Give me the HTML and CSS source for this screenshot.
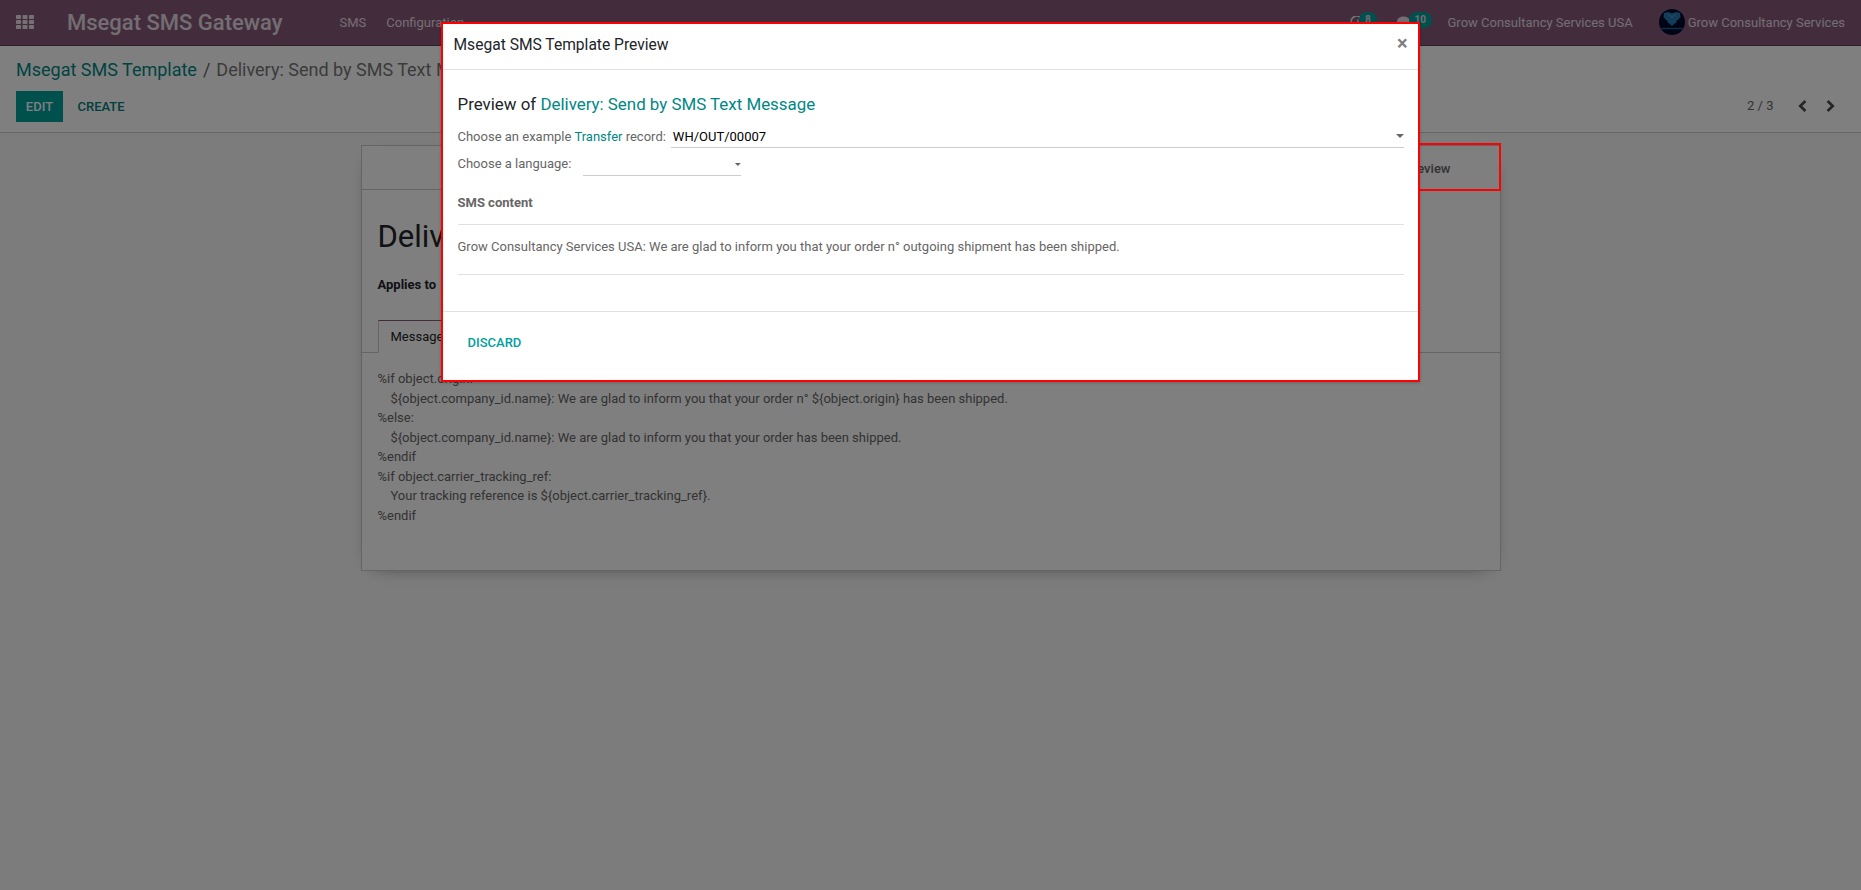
FILE: index.html
```html
<!DOCTYPE html>
<html lang="en">
<head>
<meta charset="utf-8">
<title>Msegat SMS Gateway</title>
<link rel="stylesheet" href="styles.css">
</head>
<body>
<div class="app">
  <header class="navbar">
    <svg class="apps" width="18" height="14" viewBox="0 0 18 14" fill="currentColor"><rect width="5" height="4" rx=".8"/><rect x="6.5" width="5" height="4" rx=".8"/><rect x="13" width="5" height="4" rx=".8"/><rect y="5" width="5" height="4" rx=".8"/><rect x="6.5" y="5" width="5" height="4" rx=".8"/><rect x="13" y="5" width="5" height="4" rx=".8"/><rect y="10" width="5" height="4" rx=".8"/><rect x="6.5" y="10" width="5" height="4" rx=".8"/><rect x="13" y="10" width="5" height="4" rx=".8"/></svg>
    <span class="brand">Msegat SMS Gateway</span>
    <nav class="menu"><span>SMS</span><span>Configuration</span></nav>
    <div class="systray">
      <span class="tray clock"><svg width="12" height="14" viewBox="0 0 12 14" fill="none" stroke="currentColor" stroke-width="1.8"><path d="M10 1.200A5.500 5.500 0 1 0 10 10"/><path d="M7.800 3.500v4H5" stroke-width="1.4"/></svg><b class="badge">8</b></span>
      <span class="tray chat"><svg width="14" height="13" viewBox="0 0 14 13" fill="currentColor"><ellipse cx="6.5" cy="5.5" rx="6.5" ry="5"/><path d="M3 9L1 13l5-2.5z"/></svg><b class="badge">10</b></span>
      <span class="company">Grow Consultancy Services USA</span>
      <svg class="avatar" width="26" height="26" viewBox="0 0 26 26"><circle cx="13" cy="13" r="13" fill="#000b2c"/><path d="M5 4l4-1 4 1.500L17 3l4 1 .5 4-3 3.500-1 0 0 2-2 1-2.500 2.500-2.500-2.500-2-1 0-2-1 0-3-3.500z" fill="#2878b0"/><path d="M10 5.500l3 3 3-3" stroke="#48a6dc" fill="none"/><path d="M2 19.500h22" stroke="#145c9c" stroke-width="1.200"/></svg>
      <span class="user">Grow Consultancy Services</span>
    </div>
  </header>
  <section class="panel">
    <div class="crumbs"><a>Msegat SMS Template</a><i>/</i><span>Delivery: Send by SMS Text Message</span></div>
    <div class="tools">
      <button class="btn edit">EDIT</button><button class="btn create">CREATE</button>
      <span class="count">2 / 3</span>
      <svg class="prev" width="9" height="12" viewBox="0 0 9 12" fill="none" stroke="currentColor" stroke-width="2.700"><path d="M7.400 1L2.300 6l5.100 5"/></svg>
      <svg class="next" width="9" height="12" viewBox="0 0 9 12" fill="none" stroke="currentColor" stroke-width="2.700"><path d="M1.600 1l5.100 5-5.100 5"/></svg>
    </div>
  </section>
  <main class="content">
    <article class="sheet">
      <div class="statusbar"><span>Preview</span></div>
      <h1 class="title">Delivery: Send by SMS Text Message</h1>
      <div class="applies">Applies to</div>
      <div class="tabs"><span class="tab">Message</span></div>
      <pre class="code">%if object.origin:
    ${object.company_id.name}: We are glad to inform you that your order n° ${object.origin} has been shipped.
%else:
    ${object.company_id.name}: We are glad to inform you that your order has been shipped.
%endif
%if object.carrier_tracking_ref:
    Your tracking reference is ${object.carrier_tracking_ref}.
%endif</pre>
    </article>
  </main>
</div>
<div class="backdrop"></div>
<div class="highlight"></div>
<div class="modal">
  <div class="modal-head"><span>Msegat SMS Template Preview</span><span class="close">×</span></div>
  <div class="modal-body">
    <h3 class="preview">Preview of <a>Delivery: Send by SMS Text Message</a></h3>
    <div class="row record"><span>Choose an example <a>Transfer</a> record:</span><div class="field"><span>WH/OUT/00007</span><i class="caret"></i></div></div>
    <div class="row lang"><span>Choose a language:</span><div class="field"><i class="caret"></i></div></div>
    <div class="label">SMS content</div>
    <p class="sms">Grow Consultancy Services USA: We are glad to inform you that your order n° outgoing shipment has been shipped.</p>
  </div>
  <div class="modal-foot">DISCARD</div>
</div>
</body>
</html>
```

FILE: styles.css
```css
* { box-sizing: border-box; }
body { margin: 0; height: 890px; overflow: hidden; font: 13px/19.5px Roboto, "Liberation Sans", sans-serif; color: #666; }
.app { height: 890px; display: flex; flex-direction: column; background: #f9f9f9; }
a { color: #008784; }
h1, h3, p, pre { margin: 0; font-weight: 400; }

.navbar { height: 46px; display: flex; align-items: center; padding: 0 16px; background: #875a7b; border-bottom: 1px solid #5f3f56; color: #fff; flex: none; white-space: nowrap; }
.apps { color: #e8e0e6; margin-top: -1px; }
.brand { margin-left: 33px; width: 272.5px; font-size: 22px; font-weight: 500; color: #e6dde4; }
.menu { display: flex; gap: 20px; color: #e6dde4; }
.systray { margin-left: auto; display: flex; align-items: center; color: #e6dde4; }
.tray { position: relative; width: 47px; height: 14px; }
.chat { width: 51px; }
.tray svg { display: block; }
.badge { position: absolute; left: 9.5px; top: -4px; padding: 0 6px; border-radius: 10px; background: #00a09d; font-size: 10px; line-height: 16px; font-weight: 700; }
.chat .badge { left: 12px; }
.avatar { margin: -1px 3px 0 26px; }

.panel { height: 87px; background: #fff; border-bottom: 1px solid #ccc; padding: 12px 16px 0; flex: none; }
.crumbs { font-size: 18px; line-height: 24px; display: flex; white-space: nowrap; }
.crumbs i { font-style: normal; margin: 0 6px; color: #666; }
.crumbs span { color: #777; }
.tools { display: flex; align-items: center; margin-top: 9px; height: 31px; }
.btn { border: 0; height: 31px; padding: 0; font: 500 13px/31px Roboto, sans-serif; background: none; }
.edit { width: 47px; background: #00a09d; color: #fff; }
.create { margin-left: 14.5px; color: #00807d; }
.count { margin: -2px 0 0 auto; color: #666; }
.prev, .next { color: #4c4c4c; margin-top: -2px; }
.prev { margin-left: 24.5px; }
.next { margin-left: 19px; margin-right: 10px; }

.content { flex: 1; padding: 12px 360.5px 0; }
.sheet { height: 426px; background: #fff; border: 1px solid #c8c8d3; box-shadow: 0 5px 20px -15px #000; }
.statusbar { height: 44px; border-bottom: 1px solid #c8c8d3; display: flex; justify-content: flex-end; padding: 13px 49px 0 0; font-weight: 500; }
.title { font-size: 31px; line-height: 40px; padding: 27px 16px 0; color: #212529; }
.applies { padding: 18px 16px 0; font-weight: 700; color: #212529; }
.tabs { display: flex; height: 33px; margin-top: 25px; border-bottom: 1px solid #c8c8d3; padding-left: 16px; }
.tab { height: 33px; padding: 6px 12px; border: 1px solid #c8c8d3; border-top-color: #875a7b; border-bottom-color: #fff; background: #fff; color: #212529; }
.code { font: inherit; padding: 16.5px 16px 0; white-space: pre-wrap; }

.backdrop { position: absolute; inset: 0; background: rgba(0, 0, 0, .5); }
.highlight { position: absolute; left: 1400px; top: 143px; width: 101px; height: 48px; border: 2px solid #f00; }
.modal { position: absolute; left: 441px; top: 22px; width: 979px; height: 360px; border: 2px solid #f00; background: #fff; box-shadow: 0 1px 3px rgba(0, 0, 0, .2); }
.modal-head { height: 46px; border-bottom: 1px solid #dee2e6; padding: 9px 10.5px; display: flex; justify-content: space-between; font-size: 15.6px; line-height: 24px; color: #212529; }
.close { font-size: 20px; font-weight: 700; color: #7f7f7f; line-height: 20px; }
.modal-body { height: 242px; padding: 22px 14px 0 14.5px; border-bottom: 1px solid #dee2e6; }
.preview { font-size: 16.9px; line-height: 24px; color: #212529; }
.row { display: flex; white-space: nowrap; }
.row span { padding-top: 2px; }
.record { margin-top: 9px; height: 23px; gap: 5px; }
.field { display: flex; justify-content: space-between; border-bottom: 1px solid #ccc; color: #000; }
.record .field { flex: 1; padding-left: 2px; }
.caret { width: 8px; height: 4px; background: #666; clip-path: polygon(0 0, 100% 0, 50% 100%); margin-top: 9px; }
.lang { margin-top: 2px; gap: 11.5px; height: 26px; }
.lang span { padding-top: 4px; }
.lang .field { width: 158px; justify-content: flex-end; }
.lang .caret { width: 6px; height: 3px; margin-top: 13px; }
.label { margin-top: 17px; height: 32px; border-bottom: 1px solid #dee2e6; font-weight: 700; }
.sms { height: 50px; padding-top: 12px; border-bottom: 1px solid #dee2e6; }
.modal-foot { padding: 21px 24.5px; font-weight: 500; color: #00a09d; }
```
